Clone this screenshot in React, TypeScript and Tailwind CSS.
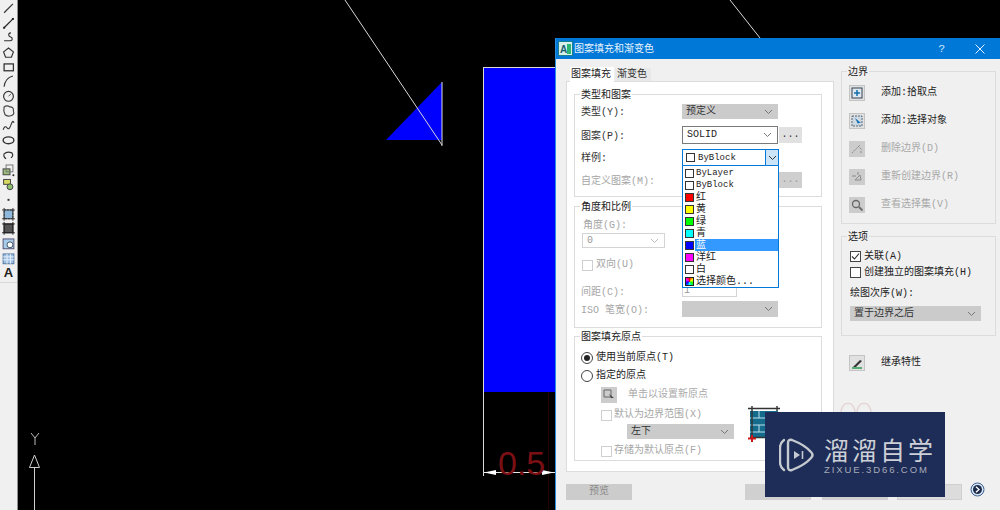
import React from "react";

const cjk = { fontFamily: '"Liberation Mono","Noto Sans CJK SC",monospace' };

function Chevron({ c = "#707070" }: { c?: string }) {
  return (
    <svg width="9" height="6" viewBox="0 0 9 6" className="shrink-0">
      <path d="M1 1 L4.5 4.5 L8 1" fill="none" stroke={c} strokeWidth="1" />
    </svg>
  );
}

function Group({ title, h, children, cls = "" }: { title: string; h: number; children?: React.ReactNode; cls?: string }) {
  return (
    <div className={"border border-[#dcdcdc] " + cls} style={{ height: h }}>
      <div className="-mt-[6px] ml-[5px] w-fit px-[1px] h-[14px] leading-[14px] bg-inherit text-[#222]">{title}</div>
      {children}
    </div>
  );
}

function Check({ checked, disabled }: { checked?: boolean; disabled?: boolean }) {
  return (
    <span className={"flex items-center justify-center w-[11px] h-[11px] shrink-0 border bg-white " + (disabled ? "border-[#cfcfcf]" : "border-[#444]")}>
      {checked && (
        <svg width="9" height="9" viewBox="0 0 9 9">
          <path d="M1 4.5 L3.5 7 L8 1.5" fill="none" stroke="#333" strokeWidth="1.1" />
        </svg>
      )}
    </span>
  );
}

function Radio({ on }: { on?: boolean }) {
  return (
    <span className="flex items-center justify-center w-[12px] h-[12px] shrink-0 rounded-full border border-[#444] bg-white">
      {on && <span className="w-[6px] h-[6px] rounded-full bg-[#222]" />}
    </span>
  );
}

function ToolBtn({ disabled, children }: { disabled?: boolean; children: React.ReactNode }) {
  return (
    <span className={"flex items-center justify-center w-[16px] h-[16px] shrink-0 " + (disabled ? "bg-[#cccccc]" : "bg-[#e1e1e1] border border-[#c4c4c4]")}>
      <svg width="12" height="12" viewBox="0 0 12 12">{children}</svg>
    </span>
  );
}

const toolIcons: React.ReactNode[] = [
  <path d="M3 12 L12 3" stroke="#333" strokeWidth="1.2" />,
  <g><path d="M3 12 L12 3" stroke="#222" strokeWidth="1.2" /><rect x="2" y="11" width="2" height="2" fill="#222" /><rect x="11" y="2" width="2" height="2" fill="#222" /></g>,
  <path d="M3 11 H9 Q12 11 11 8 L8 6 Q7 3 10 3" fill="none" stroke="#333" strokeWidth="1.2" />,
  <path d="M7.5 3 L12.5 7 L10.5 12.5 H4.5 L2.5 7 Z" fill="none" stroke="#333" strokeWidth="1.2" />,
  <rect x="3" y="4" width="9.5" height="7" fill="none" stroke="#333" strokeWidth="1.3" />,
  <path d="M3 13 Q4 4 12 2" fill="none" stroke="#333" strokeWidth="1.2" />,
  <g><circle cx="7.5" cy="7.5" r="5" fill="none" stroke="#333" strokeWidth="1.2" /><path d="M7.5 7.5 L10 5" stroke="#555" /></g>,
  <path d="M3 3 Q6 1 9 3 Q13 3 12.5 7 Q14 11 10 12 Q6 13 4 11 Q2 7 3 3 Z" fill="none" stroke="#444" strokeWidth="1.2" />,
  <path d="M2 11 Q4 6 6 9 T10 6 T13 4" fill="none" stroke="#333" strokeWidth="1.1" />,
  <ellipse cx="7.5" cy="7.5" rx="5.5" ry="3.5" fill="none" stroke="#333" strokeWidth="1.4" />,
  <path d="M5 11 Q2 9 3 6 Q6 3 11 5 Q13 8 10 10" fill="none" stroke="#333" strokeWidth="1.2" />,
  <g><rect x="2" y="6" width="7" height="6" fill="#9bbf7a" stroke="#444" /><rect x="5" y="2" width="7" height="7" fill="none" stroke="#777" /><circle cx="12.5" cy="12.5" r="1" fill="#222" /></g>,
  <g><rect x="2.5" y="2.5" width="7" height="5" fill="#d8d860" stroke="#444" /><circle cx="9" cy="10" r="3" fill="#8fc070" stroke="#444" /></g>,
  <rect x="6.5" y="7" width="2" height="2" fill="#333" />,
  <g><rect x="3" y="3" width="9" height="9" fill="#8db8dc" stroke="#333" strokeDasharray="2 1" /><path d="M1 3 H14 M1 12 H14 M3 1 V14 M12 1 V14" stroke="#333" /></g>,
  <g><rect x="3" y="3" width="9" height="9" fill="#555" stroke="#222" /><path d="M1 3 H14 M1 12 H14 M3 1 V14 M12 1 V14" stroke="#222" /></g>,
  <g><rect x="2" y="3" width="11" height="10" fill="#a7cbe8" stroke="#557" /><circle cx="9" cy="9" r="3" fill="#fff" stroke="#456" /></g>,
  <g><rect x="2" y="3" width="11" height="10" fill="#9cc0e4" stroke="#5577a0" /><path d="M2 6 H13 M2 9 H13 M6 3 V13 M9.5 3 V13" stroke="#e6f0fa" /></g>,
];

const listItems: { label: string; color: string; mono?: boolean; hl?: boolean; multi?: boolean }[] = [
  { label: "ByLayer", color: "#ffffff", mono: true },
  { label: "ByBlock", color: "#ffffff", mono: true },
  { label: "红", color: "#ff0000" },
  { label: "黄", color: "#ffff00" },
  { label: "绿", color: "#00ff00" },
  { label: "青", color: "#00ffff" },
  { label: "蓝", color: "#0000ff", hl: true },
  { label: "洋红", color: "#ff00ff" },
  { label: "白", color: "#ffffff" },
  { label: "选择颜色...", color: "#000000", multi: true },
];

function Select({ w, h, tone, text, cls = "" }: { w: number; h: number; tone: "gray" | "white" | "off"; text?: string; cls?: string }) {
  const t =
    tone === "gray"
      ? "bg-[#cbcbcb] text-[#333]"
      : tone === "white"
        ? "bg-white border border-[#7a7a7a] text-[#222]"
        : "bg-white border border-[#d4d4d4] text-[#999]";
  return (
    <div className={"flex items-center justify-between pl-[4px] pr-[5px] shrink-0 " + t + " " + cls} style={{ width: w, height: h }}>
      <span>{text}</span>
      <Chevron c={tone === "off" ? "#bbb" : "#777"} />
    </div>
  );
}

function Row({ label, children, cls = "", muted }: { label: string; children?: React.ReactNode; cls?: string; muted?: boolean }) {
  return (
    <div className={"flex items-center " + cls}>
      <span className={"w-[107px] shrink-0 pl-[6px] pt-[3px] " + (muted ? "text-[#a6a6a6]" : "text-[#333]")}>{label}</span>
      {children}
    </div>
  );
}

function SideBtn({ label, disabled, children, cls = "" }: { label: string; disabled?: boolean; children: React.ReactNode; cls?: string }) {
  return (
    <div className={"flex items-center h-[16px] " + cls}>
      <ToolBtn disabled={disabled}>{children}</ToolBtn>
      <span className={"ml-[16px] " + (disabled ? "text-[#a8a8a8]" : "text-[#222]")}>{label}</span>
    </div>
  );
}

export default function App() {
  return (
    <div className="relative flex w-[1000px] h-[510px] overflow-hidden bg-black text-[10px] leading-[12px]" style={cjk}>
      <div className="w-[18px] h-full shrink-0 bg-[#f0f0f0] border-r border-[#8f8f8f]">
        <div className="flex flex-col items-center h-[283px] pt-[1px] border-b border-[#d8d8d8]">
          {toolIcons.map((ic, i) => (
            <svg key={i} width="15" height="14.7" viewBox="0 0 15 15" className="shrink-0">{ic}</svg>
          ))}
          <span className="text-[13px] leading-[15px] font-bold text-[#222] font-['Liberation_Sans']">A</span>
        </div>
      </div>

      <svg className="flex-1 h-full" viewBox="18 0 982 510">
        <path d="M442 82 L386 140 H442 Z" fill="#0000ff" />
        <path d="M345 0 L442 145" stroke="#d8d8d8" strokeWidth="1" />
        <path d="M730 0 L760 38" stroke="#d8d8d8" strokeWidth="1" />
        <path d="M442 82 V146" stroke="#ddd" strokeWidth="1" />
        <rect x="484" y="67" width="72" height="325" fill="#0000ff" />
        <path d="M483.5 67 V476 M484 67.5 H556" stroke="#d8d8d8" strokeWidth="1" />
        <path d="M548.5 392 V510" stroke="#240305" />
        <path d="M484 472.5 H556" stroke="#e8e8e8" />
        <path d="M484 472.5 L496 470 V475 Z M554 472.5 L542 470 V475 Z" fill="#fff" />
        <text x="498" y="475" fontSize="34" fill="#7a0f14" fontFamily="Liberation Sans">0.5</text>
        <path d="M34.5 468 V510" stroke="#cfcfcf" />
        <path d="M34.5 455 L29.5 467.5 H39.5 Z" fill="none" stroke="#cfcfcf" />
        <path d="M31 433 L35 438 L39 433 M35 438 V445" fill="none" stroke="#bdbdbd" />
      </svg>

      <div className="absolute left-[555px] top-[38px] flex flex-col w-[445px] h-[472px] bg-[#f0f0f0] border-l border-[#2a8fe0] text-[#222]">
        <div className="flex items-center h-[21px] shrink-0 bg-[#0078d7] text-white">
          <svg width="15" height="15" viewBox="0 0 15 15" className="ml-[2px]">
            <rect x="0" y="0" width="15" height="15" fill="#1b7f92" />
            <rect x="1" y="1" width="13" height="13" fill="#d6efe8" />
            <text x="2" y="12" fontSize="10" fontWeight="700" fill="#16606f" fontFamily="Liberation Sans">A</text>
            <rect x="9" y="3" width="4" height="10" fill="#2bb673" />
          </svg>
          <span className="ml-[1px] pt-[2px] text-[10px] text-[#e8f3fc]">图案填充和渐变色</span>
          <span className="ml-auto mr-[30px] text-[11px] text-[#d5e9fa]">?</span>
          <svg width="10" height="10" viewBox="0 0 10 10" className="mr-[15px]">
            <path d="M0.5 0.5 L9.5 9.5 M9.5 0.5 L0.5 9.5" stroke="#e6f2fc" strokeWidth="1" />
          </svg>
        </div>

        <div className="flex h-[413px] shrink-0">
          <div className="flex flex-col w-[268px] ml-[10px]">
            <div className="flex items-end h-[22px] shrink-0 pl-[4px]">
              <div className="relative z-10 h-[15px] w-[44px] -mb-[1px] bg-white pl-[1px] leading-[15px]">图案填充</div>
              <div className="h-[13px] w-[36px] ml-px bg-[#e8e8e8] pl-[2px] leading-[13px] text-[#333]">渐变色</div>
            </div>
            <div className="flex flex-col h-[391px] shrink-0 bg-white border border-[#dcdcdc] pl-[7px] pr-[11px] pt-[12px]">
              <Group title="类型和图案" h={103} cls="bg-white">
                <Row label="类型(Y):" cls="h-[15px] mt-[1px]">
                  <Select w={96} h={15} tone="gray" text="预定义" />
                </Row>
                <Row label="图案(P):" cls="h-[18px] mt-[7px]">
                  <Select w={96} h={18} tone="white" text="SOLID" />
                  <span className="flex items-center justify-center w-[23px] h-[16px] ml-px bg-[#e1e1e1] text-[#333]">...</span>
                </Row>
                <Row label="样例:" cls="h-[16px] mt-[5px]" />
                <Row label="自定义图案(M):" cls="h-[16px] mt-[7px]" muted>
                  <span className="w-[96px] shrink-0" />
                  <span className="flex items-center justify-center w-[23px] h-[16px] ml-px bg-[#cfcfcf] text-[#999]">...</span>
                </Row>
              </Group>

              <Group title="角度和比例" h={122} cls="mt-[9px] bg-white">
                <div className="pl-[8px] h-[12px] mt-[5px] text-[#a6a6a6]">角度(G):</div>
                <Select w={83} h={15} tone="off" text="0" cls="ml-[7px] mt-[1px]" />
                <div className="flex items-center gap-[3px] h-[12px] mt-[11px] ml-[7px] text-[#a6a6a6]">
                  <Check disabled />
                  <span>双向(U)</span>
                </div>
                <Row label="间距(C):" cls="h-[12px] mt-[14px]" muted>
                  <span className="flex items-center w-[55px] h-[12px] pl-[1px] border border-[#d4d4d4] text-[#999]">1</span>
                </Row>
                <Row label="ISO 笔宽(O):" cls="h-[16px] mt-[4px]" muted>
                  <Select w={96} h={16} tone="gray" />
                </Row>
              </Group>

              <Group title="图案填充原点" h={125} cls="mt-[8px] bg-white">
                <div className="flex items-center gap-[3px] h-[13px] mt-[6px] ml-[6px] text-[#222]">
                  <Radio on />
                  <span>使用当前原点(T)</span>
                </div>
                <div className="flex items-center gap-[3px] h-[13px] mt-[5px] ml-[6px] text-[#222]">
                  <Radio />
                  <span>指定的原点</span>
                </div>
                <div className="flex items-center h-[17px] mt-[4px] ml-[26px] text-[#aaa]">
                  <ToolBtn disabled>
                    <path d="M1 1 H8 V8 H1 Z" fill="none" stroke="#666" /><path d="M6 5 L11 9 L8 9 L9 11 Z" fill="#444" />
                  </ToolBtn>
                  <span className="ml-[11px]">单击以设置新原点</span>
                </div>
                <div className="flex items-center gap-[2px] h-[12px] mt-[6px] ml-[26px] text-[#a6a6a6]">
                  <Check disabled />
                  <span>默认为边界范围(X)</span>
                </div>
                <Select w={107} h={15} tone="gray" text="左下" cls="ml-[52px] mt-[3px]" />
                <div className="flex items-center gap-[2px] h-[12px] mt-[6px] ml-[26px] text-[#a6a6a6]">
                  <Check disabled />
                  <span>存储为默认原点(F)</span>
                </div>
              </Group>
            </div>
          </div>

          <div className="flex flex-col w-[155px] ml-[7px] pt-[12px] bg-[#f0f0f0]">
            <Group title="边界" h={153} cls="bg-[#f0f0f0]">
              <div className="flex flex-col gap-[12px] pl-[7px] pt-[5px]">
                <SideBtn label="添加:拾取点">
                  <rect x="1" y="1" width="10" height="10" fill="#dfe8ef" stroke="#345" /><path d="M6 3 V9 M3 6 H9" stroke="#146fb0" strokeWidth="1.5" />
                </SideBtn>
                <SideBtn label="添加:选择对象">
                  <rect x="1" y="1" width="10" height="10" fill="#cfd9e2" stroke="#567" strokeDasharray="2 1" /><path d="M4 3 L10 8 L7 8 L8 11 Z" fill="#146fb0" />
                </SideBtn>
                <SideBtn label="删除边界(D)" disabled>
                  <path d="M1 10 L5 6 L9 2 M7 3 L11 7 M9 9 H11" stroke="#8a8a8a" strokeDasharray="2 1" fill="none" />
                </SideBtn>
                <SideBtn label="重新创建边界(R)" disabled>
                  <path d="M1 5 H5 M7 1 V4 M4 9 L9 4 L10 9 Z" stroke="#8a8a8a" fill="none" />
                </SideBtn>
                <SideBtn label="查看选择集(V)" disabled>
                  <circle cx="5" cy="5" r="3.5" fill="none" stroke="#666" strokeWidth="1.3" /><path d="M8 8 L11.5 11.5" stroke="#666" strokeWidth="1.8" />
                </SideBtn>
              </div>
            </Group>
            <Group title="选项" h={100} cls="mt-[12px] bg-[#f0f0f0]">
              <div className="flex flex-col pl-[8px] pt-[5px]">
                <div className="flex items-center gap-[3px] h-[13px]"><Check checked /><span>关联(A)</span></div>
                <div className="flex items-center gap-[3px] h-[13px] mt-[3px]"><Check /><span>创建独立的图案填充(H)</span></div>
                <div className="h-[12px] mt-[9px]">绘图次序(W):</div>
                <Select w={131} h={15} tone="gray" text="置于边界之后" cls="mt-[6px]" />
              </div>
            </Group>
            <SideBtn label="继承特性" cls="mt-[19px] ml-[8px]">
              <path d="M2 10 L9 3 L11 4 L5 10 Z" fill="#333" /><path d="M1 11 H11" stroke="#2a9a50" strokeWidth="1.5" />
            </SideBtn>
          </div>
        </div>

        <div className="flex items-center h-[16px] mt-[12px] shrink-0 text-[#8a8a8a]">
          <span className="flex items-center justify-center ml-[10px] w-[66px] h-[16px] bg-[#cccccc]">预览</span>
          <span className="ml-[113px] w-[66px] h-[16px] bg-[#d0d0d0]" />
          <span className="ml-[11px] w-[66px] h-[16px] bg-[#d0d0d0]" />
          <span className="ml-[9px] w-[65px] h-[16px] bg-[#dcdcdc] border border-[#cfcfcf]" />
          <svg width="15" height="15" viewBox="0 0 15 15" className="ml-[8px] mb-[6px]">
            <circle cx="7.5" cy="7.5" r="6.5" fill="#dbe6f5" stroke="#3a5f92" />
            <circle cx="7.5" cy="7.5" r="4.5" fill="#1c2c4a" />
            <path d="M6 4.8 L9 7.5 L6 10.2" fill="none" stroke="#fff" strokeWidth="1.3" />
          </svg>
        </div>
      </div>

      {/* colour list dropped down over the dialog */}
      <div className="absolute left-[682px] top-[149px] w-[97px] text-[#222]">
        <div className="flex items-center h-[17px] bg-white border border-[#0078d7]">
          <span className="w-[9px] h-[9px] ml-[3px] border border-[#333] bg-white shrink-0" />
          <span className="ml-[3px] text-[9px] flex-1">ByBlock</span>
          <span className="flex items-center justify-center w-[13px] h-full bg-[#cce4f7] border-l border-[#0078d7]"><Chevron c="#333" /></span>
        </div>
        <div className="flex flex-col h-[122px] bg-white border border-t-0 border-[#0078d7] pt-[1px] pl-[1px]">
          {listItems.map((it) => (
            <div key={it.label} className="flex items-center h-[12px] shrink-0">
              {it.multi ? (
                <span className="w-[9px] h-[9px] ml-[1px] shrink-0 bg-[conic-gradient(#f00,#ff0,#0f0,#0ff,#00f,#f0f,#f00)] border border-[#222]" />
              ) : (
                <span className="w-[9px] h-[9px] ml-[1px] shrink-0 border border-[#333]" style={{ background: it.color }} />
              )}
              <span className={"ml-[1px] pl-[1px] h-[12px] leading-[13px] " + (it.hl ? "flex-1 bg-[#3399ff] text-white" : "") + (it.mono ? " text-[9px]" : "")}>{it.label}</span>
            </div>
          ))}
        </div>
      </div>

      {/* hatch preview glyph and faint marks */}
      <svg className="absolute left-[746px] top-[404px]" width="36" height="40" viewBox="0 0 36 40">
        <rect x="4" y="7" width="28" height="26" fill="#146b8c" />
        <path d="M4 14 H32 M4 21 H32 M4 28 H32 M13 7 V14 M24 14 V21 M13 21 V28" stroke="#bfe3ee" />
        <path d="M2 4.5 H34 M6 2 V34 M31 2 V7 M4 33.5 H32" stroke="#333" strokeWidth="1.4" />
        <path d="M6 31 V38 M2 34.5 H10" stroke="#c81a1a" strokeWidth="2" />
      </svg>
      <svg className="absolute left-[838px] top-[402px]" width="36" height="11" viewBox="0 0 36 11">
        <path d="M3 11 C3 -2 17 -2 17 11 M19 11 C19 -2 33 -2 33 11" fill="none" stroke="#e6d6d6" strokeWidth="1.5" />
      </svg>

      {/* watermark */}
      <div className="absolute left-[765px] top-[412px] flex items-center w-[180px] h-[85px] bg-[#1e2d57]">
        <svg width="36" height="36" viewBox="0 0 36 36" className="ml-[14px] shrink-0">
          <path d="M5 3 Q1 6 1 11 V25 Q1 30 5 33" fill="none" stroke="#c5c9d0" strokeWidth="2.4" strokeLinecap="round" />
          <path d="M9 6 Q9 2 13 3 Q26 8 32 15 Q35 18 32 21 Q26 28 13 33 Q9 34 9 30 Z" fill="none" stroke="#c5c9d0" strokeWidth="2.4" strokeLinejoin="round" />
          <path d="M15 14 L21 18 L15 22 Z" fill="#c5c9d0" />
          <path d="M23.5 14 V22" stroke="#c5c9d0" strokeWidth="1.6" />
        </svg>
        <div className="flex flex-col ml-[9px]">
          <span className="text-[25px] leading-[30px] tracking-[3px] text-[#cdd0d6] font-['Noto_Sans_CJK_SC'] whitespace-nowrap">溜溜自学</span>
          <span className="text-[9.5px] leading-[11px] tracking-[1.9px] text-[#a6abb8] font-['Liberation_Sans'] whitespace-nowrap">ZIXUE.3D66.COM</span>
        </div>
      </div>
    </div>
  );
}
